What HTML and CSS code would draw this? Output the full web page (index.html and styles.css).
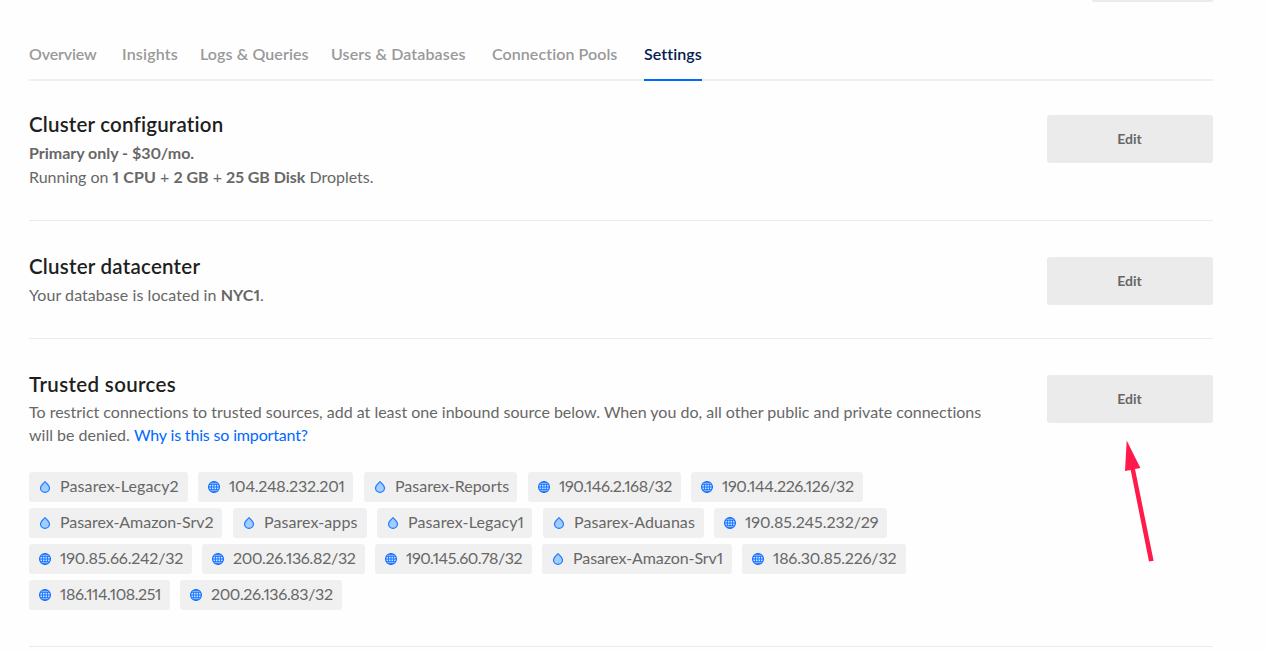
FILE: index.html
```html
<!DOCTYPE html>
<html lang="en">
<head>
<meta charset="utf-8">
<title>Database settings</title>
<link rel="stylesheet" href="styles.css">
</head>
<body>
<svg class="sprite" aria-hidden="true">
  <symbol id="drop" viewBox="0 0 12 12">
    <path d="M6 .7C4.700 2.200 1.500 4.400 1.500 7.100a4.500 4.300 0 0 0 9 0C10.500 4.400 7.300 2.200 6 .7z" fill="#a3cdff" stroke="#1f7cff" stroke-width="1.200" stroke-linejoin="round"/>
  </symbol>
  <symbol id="globe" viewBox="0 0 12 12">
    <circle cx="6" cy="6" r="5.300" fill="#cfe3ff"/>
    <g fill="none" stroke="#0b6cff">
      <circle cx="6" cy="6" r="5.400" stroke-width="1.200"/>
      <path d="M6 .5v11M.5 6h11" stroke-width=".9"/>
      <ellipse cx="6" cy="6" rx="2.700" ry="5.300" stroke-width=".9"/>
      <path d="M1.200 3.500h9.600M1.200 8.500h9.600" stroke-width=".7"/>
    </g>
  </symbol>
</svg>
<main class="page">
  <div class="topbar"><div class="topbar-button"></div></div>
  <nav class="tabs">
    <a class="tab overview">Overview</a>
    <a class="tab insights">Insights</a>
    <a class="tab logs">Logs &amp; Queries</a>
    <a class="tab users">Users &amp; Databases</a>
    <a class="tab pools">Connection Pools</a>
    <a class="tab active">Settings</a>
  </nav>
  <section class="setting configuration">
    <div class="body">
      <h2>Cluster configuration</h2>
      <p><b>Primary only - $30/mo.</b><br>Running on <b class="cpu">1 CPU</b> + <b>2 GB</b> + <b>25 GB Disk</b> Droplets.</p>
    </div>
    <button class="edit">Edit</button>
  </section>
  <section class="setting datacenter">
    <div class="body">
      <h2>Cluster datacenter</h2>
      <p class="location">Your database is located in <b>NYC1</b>.</p>
    </div>
    <button class="edit">Edit</button>
  </section>
  <section class="setting trusted">
    <div class="body">
      <h2>Trusted sources</h2>
      <p>To restrict connections to trusted sources, add at least one inbound source below. When you do, all other public and private connections<br>will be denied. <a class="why">Why is this so important?</a></p>
      <ul class="sources">
        <li><svg><use href="#drop"/></svg>Pasarex-Legacy2</li>
        <li><svg><use href="#globe"/></svg>104.248.232.201</li>
        <li><svg><use href="#drop"/></svg>Pasarex-Reports</li>
        <li><svg><use href="#globe"/></svg>190.146.2.168/32</li>
        <li><svg><use href="#globe"/></svg>190.144.226.126/32</li>
        <li><svg><use href="#drop"/></svg>Pasarex-Amazon-Srv2</li>
        <li><svg><use href="#drop"/></svg>Pasarex-apps</li>
        <li><svg><use href="#drop"/></svg>Pasarex-Legacy1</li>
        <li><svg><use href="#drop"/></svg>Pasarex-Aduanas</li>
        <li><svg><use href="#globe"/></svg>190.85.245.232/29</li>
        <li><svg><use href="#globe"/></svg>190.85.66.242/32</li>
        <li><svg><use href="#globe"/></svg>200.26.136.82/32</li>
        <li><svg><use href="#globe"/></svg>190.145.60.78/32</li>
        <li><svg><use href="#drop"/></svg>Pasarex-Amazon-Srv1</li>
        <li><svg><use href="#globe"/></svg>186.30.85.226/32</li>
        <li><svg><use href="#globe"/></svg>186.114.108.251</li>
        <li><svg><use href="#globe"/></svg>200.26.136.83/32</li>
      </ul>
    </div>
    <button class="edit">Edit</button>
  </section>
</main>
<svg class="arrow" viewBox="0 0 32 124" aria-hidden="true">
  <path d="M6.700 .5 20.400 28 15 29.100 33.600 120.800 29 121.500 10.700 29.900 5 31z" fill="#ff1a4b"/>
</svg>
</body>
</html>
```
FILE: styles.css
```css
* { box-sizing: border-box; }
body {
  margin: 0;
  height: 651px;
  overflow: hidden;
  background: #fefefe;
  color: #676767;
  font: 16px/24px Lato, "Open Sans", sans-serif;
  font-variant-ligatures: none;
  font-variant-numeric: proportional-nums;
}
.sprite { display: none; }
.page { width: 1184px; margin-left: 29px; }

.topbar { display: flex; justify-content: flex-end; height: 2px; }
.topbar-button { width: 121px; background: #ebebeb; border-radius: 0 0 3px 3px; }

.tabs {
  display: flex;
  height: 79px;
  padding-top: 40px;
  border-bottom: 2px solid #efefef;
  font-weight: 600;
  color: #999;
}
.tab { flex: none; height: 39px; white-space: nowrap; }
.overview { width: 93px; letter-spacing: -.15px; }
.insights { width: 78px; letter-spacing: .18px; }
.logs { width: 131px; letter-spacing: .1px; }
.users { width: 161px; letter-spacing: .12px; }
.pools { width: 152px; letter-spacing: .08px; }
.active {
  width: 58px;
  color: #031b4e;
  letter-spacing: .1px;
  border-bottom: 2px solid #0069ff;
}

.setting {
  display: flex;
  justify-content: space-between;
  align-items: flex-start;
  padding-top: 32px;
  border-bottom: 1px solid #ebebeb;
}
.configuration { height: 140px; padding-top: 30px; }
.datacenter { height: 118px; }
.trusted { height: 308px; }
.body { width: 960px; }
h2 {
  margin: 0 0 4px;
  color: #1f1f1f;
  font-size: 20.5px;
  font-weight: 600;
  line-height: 26px;
  letter-spacing: .2px;
}
p { margin: 0; white-space: nowrap; }
.configuration p { letter-spacing: -.02px; }
.cpu { letter-spacing: .12px; }
.location { letter-spacing: .06px; }
.datacenter h2 { letter-spacing: .24px; }
.trusted h2 { margin-bottom: 3px; letter-spacing: .35px; }
.trusted p { line-height: 23px; letter-spacing: -.005px; }
.trusted .why { color: #0069ff; letter-spacing: -.16px; }

.edit {
  flex: none;
  width: 166px;
  height: 48px;
  margin: 4px 0 0;
  padding: 0 1px 2px 0;
  border: 0;
  border-radius: 3px;
  background: #ebebeb;
  color: #676767;
  font: 700 14px Lato, "Open Sans", sans-serif;
}

.sources {
  display: flex;
  flex-wrap: wrap;
  gap: 6px 10px;
  margin: 26px 0 0;
  padding: 0;
  list-style: none;
}
.sources li {
  display: flex;
  align-items: center;
  flex: none;
  height: 30px;
  padding-left: 10px;
  border-radius: 3px;
  background: #f0f0f0;
  line-height: 22px;
  padding-bottom: 2px;
  white-space: nowrap;
}
.sources svg { width: 12px; height: 12px; margin: 2px 9px 0 0; }
.sources li:nth-child(1) { width: 159px; letter-spacing: .12px; }
.sources li:nth-child(2) { width: 155px; letter-spacing: -.22px; margin-right: 1px; }
.sources li:nth-child(3) { width: 153px; margin-right: 1px; }
.sources li:nth-child(4) { width: 153px; letter-spacing: -.42px; }
.sources li:nth-child(5) { width: 172px; letter-spacing: -.35px; }
.sources li:nth-child(6) { width: 193px; letter-spacing: -.04px; margin-right: 1px; }
.sources li:nth-child(7) { width: 134px; letter-spacing: .08px; }
.sources li:nth-child(8) { width: 155px; letter-spacing: .12px; margin-right: 1px; }
.sources li:nth-child(9) { width: 161px; letter-spacing: .06px; }
.sources li:nth-child(10) { width: 173px; letter-spacing: -.05px; }
.sources li:nth-child(11) { width: 163px; letter-spacing: -.17px; }
.sources li:nth-child(12) { width: 163px; letter-spacing: -.29px; }
.sources li:nth-child(13) { width: 157px; letter-spacing: -.45px; }
.sources li:nth-child(14) { width: 190px; letter-spacing: -.08px; }
.sources li:nth-child(15) { width: 164px; letter-spacing: -.2px; }
.sources li:nth-child(16) { width: 141px; letter-spacing: -.42px; }
.sources li:nth-child(17) { width: 162px; letter-spacing: -.36px; }

/* Annotation drawn over the page */
.arrow {
  position: absolute;
  left: 1120px;
  top: 440px;
  width: 32px;
  height: 124px;
  overflow: visible;
}
```
